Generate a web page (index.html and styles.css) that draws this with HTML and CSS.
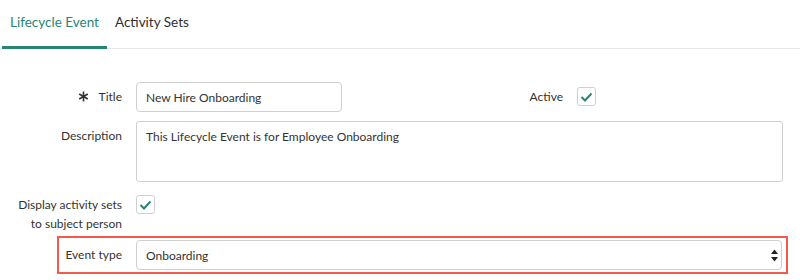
FILE: index.html
```html
<!DOCTYPE html>
<html lang="en">
  <head>
    <meta charset="UTF-8" />
    <title>Lifecycle Event</title>
    <link rel="stylesheet" href="styles.css">
  </head>
  <body>
    <!-- Tabs -->
    <nav class="tabs">
      <a class="tab active">Lifecycle Event</a>
      <a class="tab">Activity Sets</a>
    </nav>

    <form class="form">
      <div class="row">
        <label class="label" for="title">
          <svg class="required" width="11" height="11" viewBox="0 0 11 11">
            <path d="M5.5 0.5v10M1.2 3l8.6 5M1.2 8l8.6-5" stroke="#333" stroke-width="1.6" fill="none" />
          </svg>
          Title
        </label>
        <input class="input title-input" id="title" type="text" value="New Hire Onboarding" />
        <span class="label side-label">Active</span>
        <span class="checkbox">
          <svg width="13" height="10" viewBox="0 0 13 10"><path d="M1.5 5l3.5 3.5 6.5-7" stroke="#278575" stroke-width="2" fill="none" /></svg>
        </span>
      </div>

      <div class="row">
        <label class="label" for="description">Description</label>
        <textarea class="input textarea" id="description">This Lifecycle Event is for Employee Onboarding</textarea>
      </div>

      <div class="row display-row">
        <span class="label two-line">Display activity sets<br>to subject person</span>
        <span class="checkbox">
          <svg width="13" height="10" viewBox="0 0 13 10"><path d="M1.5 5l3.5 3.5 6.5-7" stroke="#278575" stroke-width="2" fill="none" /></svg>
        </span>
      </div>

      <div class="row highlight">
        <label class="label" for="event-type">Event type</label>
        <div class="select-wrap">
          <select class="input select" id="event-type">
            <option>Onboarding</option>
          </select>
          <svg class="select-arrows" width="7" height="13" viewBox="0 0 7 13">
            <path d="M3.5 0.5L7 5H0z M3.5 12.5L7 8H0z" fill="#222" />
          </svg>
        </div>
      </div>
    </form>
  </body>
</html>
```

FILE: styles.css
```css
body {
  margin: 0;
  font-family: Lato, 'Open Sans', sans-serif;
  font-size: 12px;
  color: #333;
  background: #fff;
}

.tabs {
  display: flex;
  padding-left: 2px;
  border-bottom: 1px solid #e6e6e6;
}

.tab {
  display: block;
  height: 46px;
  line-height: 44px;
  padding: 0 8px;
  font-size: 13.5px;
  color: #2e2e2e;
  border-bottom: 3px solid transparent;
  margin-bottom: -1px;
}

.tab.active {
  color: #278575;
  border-bottom-color: #278575;
}

.form {
  padding-top: 33px;
}

.row {
  display: flex;
  align-items: flex-start;
  margin-bottom: 9px;
}

.label {
  width: 122px;
  margin-right: 14px;
  text-align: right;
  line-height: 30px;
  color: #333;
  flex-shrink: 0;
}

.required {
  margin-right: 7px;
  vertical-align: -1px;
}

.side-label {
  width: 221px;
}

.two-line {
  line-height: 19px;
  margin-top: 4px;
}

.input {
  box-sizing: border-box;
  height: 30px;
  border: 1px solid #cfcfcf;
  border-radius: 4px;
  padding: 0 9px;
  font-family: inherit;
  font-size: 12px;
  color: #333;
  background: #fff;
}

.title-input {
  width: 206px;
}

.textarea {
  width: 647px;
  height: 61px;
  padding-top: 6px;
  resize: none;
  line-height: 18px;
  border-radius: 3px;
}

.checkbox {
  box-sizing: border-box;
  width: 19px;
  height: 19px;
  margin-top: 5px;
  border: 1px solid #cfcfcf;
  border-radius: 3px;
  display: flex;
  align-items: center;
  justify-content: center;
}

.display-row {
  margin-bottom: 0;
  height: 45px;
}

.display-row .checkbox {
  margin-top: 4px;
}

.highlight {
  box-sizing: border-box;
  width: 731px;
  margin-left: 57px;
  padding: 2px 0;
  border: 2px solid #f25a4a;
}

.highlight .label {
  width: 63px;
}

.select-wrap {
  position: relative;
}

.select {
  width: 646px;
  appearance: none;
  -webkit-appearance: none;
}

.select-arrows {
  position: absolute;
  right: 4px;
  top: 9px;
}
```
